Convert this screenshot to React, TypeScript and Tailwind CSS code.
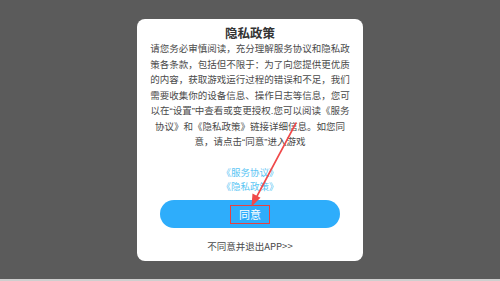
import React from 'react';

const Q: React.FC<{ children: React.ReactNode }> = ({ children }) => (
  <span style={{ fontFamily: '"Liberation Sans", sans-serif' }}>{children}</span>
);

const bodyLines: React.ReactNode[] = [
  '请您务必审慎阅读，充分理解服务协议和隐私政',
  '策各条款，包括但不限于：为了向您提供更优质',
  '的内容，获取游戏运行过程的错误和不足，我们',
  '需要收集你的设备信息、操作日志等信息，您可',
  <>以在<Q>“</Q>设置<Q>”</Q>中查看或变更授权<Q>.</Q>您可以阅读《服务</>,
  '协议》和《隐私政策》链接详细信息。如您同',
  <>意，请点击<Q>“</Q>同意<Q>”</Q>进入游戏</>,
];

const PointerArrow: React.FC = () => (
  <svg className="absolute inset-0 pointer-events-none" width="500" height="281" viewBox="0 0 500 281">
    <line x1="296" y1="123" x2="256" y2="198" stroke="#f0494a" strokeWidth="1.6" strokeLinecap="round" />
    <polygon points="251.5,206.5 252.5,193.5 260.5,197.8" fill="#f0494a" />
  </svg>
);

const App: React.FC = () => {
  return (
    <div
      className="relative w-[500px] h-[281px] flex flex-col overflow-hidden"
      style={{ fontFamily: '"Noto Sans CJK SC", "Noto Sans", sans-serif' }}
    >
      <div className="flex-1 bg-[#5b5b5b] pt-[19px]">
        <div className="mx-auto w-[226px] h-[242px] bg-white rounded-[8px] flex flex-col items-center pt-[5px]">
          <h2 className="text-[12.5px] leading-[17px] font-bold text-[#333333]">隐私政策</h2>
          <div className="text-center text-[9.5px] leading-[15.5px] text-[#4a4a4a] whitespace-nowrap">
            {bodyLines.map((line, i) => (
              <div key={i}>{line}</div>
            ))}
          </div>
          <div className="mt-[15.5px] text-center text-[9.5px] leading-[14px] text-[#5cc6f4]">
            <div>《服务协议》</div>
            <div>《隐私政策》</div>
          </div>
          <button className="mt-[7px] w-[180px] h-[28px] rounded-full bg-[#2eadfb] flex items-center justify-center">
            <span className="w-[40px] h-[19px] border-[1.5px] border-[#e8413f] text-white text-[11px] leading-[15px] flex items-center justify-center">
              同意
            </span>
          </button>
          <div className="mt-[11px] text-[9.5px] leading-[14px] text-[#4a4a4a]">不同意并退出APP&gt;&gt;</div>
        </div>
      </div>
      <div className="h-[2px] bg-[#cfcfcf]" />
      <PointerArrow />
    </div>
  );
};

export default App;
